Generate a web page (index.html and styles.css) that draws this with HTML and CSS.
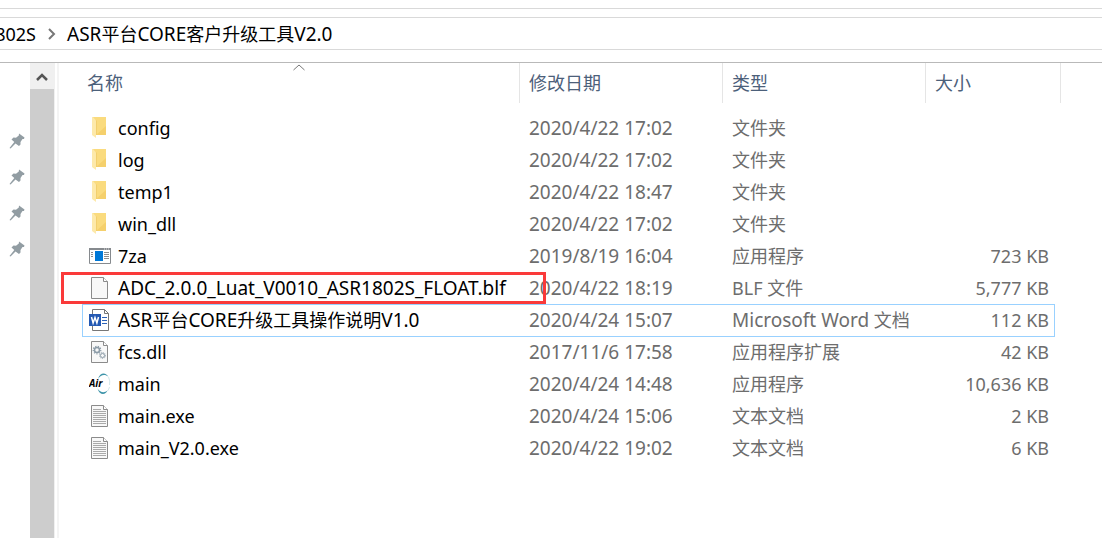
FILE: index.html
```
<!DOCTYPE html>
<html lang="zh-CN">
  <head>
    <meta charset="UTF-8" />
    <meta name="viewport" content="width=device-width, initial-scale=1.0" />
    <title>ASR平台CORE客户升级工具V2.0</title>
    <link rel="stylesheet" href="styles.css">
  </head>
  <body>
    <svg class="sprite" aria-hidden="true">
      <symbol id="pin" viewBox="0 0 16 16">
        <path d="M10 .5 15.500 4.500 15 6 13.500 6 11.500 9 11.500 11.500 10 13 6.500 10.500 1.500 15.500.5 15 5.300 9 2.500 6.500 4.500 4.500 7 4.800 9.800 2.500z" fill="#929da3" />
      </symbol>
      <symbol id="folder" viewBox="0 0 22 22">
        <path d="M4 0h13v18H4z" fill="#fadb7e" />
        <path d="M17 9v9H7z" fill="#f5d06c" />
        <path d="M3 0h1l3 3.500V21l-4-3z" fill="#fde9aa" />
        <path d="M7.500 3.500V18" stroke="#f0cb69" stroke-width=".8" />
      </symbol>
      <symbol id="app" viewBox="0 0 22 22">
        <path d="M.5 3.500h21v15H.5z" fill="#fff" stroke="#868a8e" />
        <path d="M0 3h22v2H0z" fill="#868a8e" />
        <path d="M15 3.500h1v1h-1zM17 3.500h1v1h-1zM19 3.500h1v1h-1z" fill="#ddd" />
        <path d="M6 6h8v10H6z" fill="#0078d7" />
        <path d="M2 7.500h2M2 9.500h2M2 11.500h2M15 7.500h5M15 9.500h5M15 11.500h5M15 13.500h5" stroke="#8d8d8d" />
      </symbol>
      <symbol id="file" viewBox="0 0 22 22">
        <path d="M2.500.5h12l4 4v17h-16z" fill="#f8f8f8" stroke="#8b8b8b" />
        <path d="M14.500.5v4h4" fill="#fff" stroke="#8b8b8b" />
      </symbol>
      <symbol id="word" viewBox="0 0 22 22">
        <path d="M3.500.5h12l4 4v17h-16z" fill="#fff" stroke="#777" />
        <path d="M15.500.5v4h4" fill="none" stroke="#777" />
        <path d="M13 8.500h5M13 11.500h5M13 14.500h5" stroke="#2b62b8" />
        <path d="M0 5h12v12H0z" fill="#2459b3" />
        <path d="m2.500 8 1.600 6L6 8.500 7.900 14 9.500 8" fill="none" stroke="#fff" stroke-width="1.500" />
      </symbol>
      <symbol id="dll" viewBox="0 0 22 22">
        <use href="#file" />
        <circle cx="8" cy="9" r="2.500" fill="none" stroke="#8b9ba7" stroke-width="1.500" />
        <circle cx="8" cy="9" r="3.800" fill="none" stroke="#8b9ba7" stroke-width="1.200" stroke-dasharray="1.300 1.300" />
        <circle cx="13.500" cy="14.500" r="2" fill="#f8f8f8" stroke="#8b9ba7" />
        <circle cx="13.500" cy="14.500" r="3" fill="none" stroke="#8b9ba7" stroke-dasharray="1 1" />
      </symbol>
      <symbol id="air" viewBox="0 0 22 22">
        <path d="M9 6C11-1 17-1 19.500 4 16 1 12 1.500 9 6z" fill="#3f95aa" />
        <path d="M8.500 15.500c2 7 8 7 10 2-3 2.500-7 2.500-10-2z" fill="#3f95aa" />
        <path d="M19.500 4q2 4 1 8M20.500 14q-1 3-2 4" fill="none" stroke="#b5d6dc" stroke-width=".6" />
        <text x="0" y="14" class="air-text">Air</text>
      </symbol>
      <symbol id="txt" viewBox="0 0 22 22">
        <use href="#file" />
        <path d="M4 4.500h8M4 6.500h13M4 8.500h13M4 10.500h13M4 12.500h13M4 14.500h13M4 16.500h13M4 18.500h13" stroke="#aaa" />
      </symbol>
    </svg>

    <div class="window">
      <nav class="address" aria-label="地址">
        <button type="button" class="crumb crumb-parent">802S</button>
        <svg class="crumb-arrow" viewBox="0 0 8 12"><path d="m1 1 5 5-5 5" fill="none" stroke="#777" stroke-width="2" /></svg>
        <button type="button" class="crumb"><span class="latin">ASR</span>平台<span class="latin">CORE</span>客户升级工具<span class="latin">V2.0</span></button>
      </nav>

      <div class="content">
        <aside class="sidebar">
          <svg><use href="#pin" /></svg>
          <svg><use href="#pin" /></svg>
          <svg><use href="#pin" /></svg>
          <svg><use href="#pin" /></svg>
        </aside>
        <div class="scrollbar">
          <button type="button" aria-label="向上滚动">
            <svg viewBox="0 0 12 9"><path d="m1 8 5-5 5 5" fill="none" stroke="#555" stroke-width="2.500" /></svg>
          </button>
          <div class="thumb"></div>
        </div>

        <main class="files">
          <table>
            <colgroup>
              <col class="col-name" />
              <col class="col-date" />
              <col class="col-type" />
              <col class="col-size" />
            </colgroup>
            <thead>
              <tr>
                <th>
                  <button type="button">名称</button>
                  <svg class="sort" viewBox="0 0 12 7"><path d="m.5 6 5.500-5 5.500 5" fill="none" stroke="#777" /></svg>
                </th>
                <th><button type="button">修改日期</button></th>
                <th><button type="button">类型</button></th>
                <th><button type="button">大小</button></th>
              </tr>
            </thead>
            <tbody>
              <tr>
                <td><div class="name"><svg><use href="#folder" /></svg>config</div></td>
                <td class="date">2020/4/22 17:02</td>
                <td>文件夹</td>
                <td></td>
              </tr>
              <tr>
                <td><div class="name"><svg><use href="#folder" /></svg>log</div></td>
                <td class="date">2020/4/22 17:02</td>
                <td>文件夹</td>
                <td></td>
              </tr>
              <tr>
                <td><div class="name"><svg><use href="#folder" /></svg>temp1</div></td>
                <td class="date">2020/4/22 18:47</td>
                <td>文件夹</td>
                <td></td>
              </tr>
              <tr>
                <td><div class="name"><svg><use href="#folder" /></svg>win_dll</div></td>
                <td class="date">2020/4/22 17:02</td>
                <td>文件夹</td>
                <td></td>
              </tr>
              <tr>
                <td><div class="name"><svg><use href="#app" /></svg>7za</div></td>
                <td class="date">2019/8/19 16:04</td>
                <td>应用程序</td>
                <td class="size">723 KB</td>
              </tr>
              <tr class="marked">
                <td><div class="name"><svg><use href="#file" /></svg><span class="latin">ADC_2.0.0_Luat_V0010_ASR1802S_FLOAT.blf</span></div></td>
                <td class="date">2020/4/22 18:19</td>
                <td>BLF 文件</td>
                <td class="size">5,777 KB</td>
              </tr>
              <tr class="focused">
                <td><div class="name"><svg><use href="#word" /></svg><span><span class="latin">ASR</span>平台<span class="latin">CORE</span>升级工具操作说明<span class="latin">V1.0</span></span></div></td>
                <td class="date">2020/4/24 15:07</td>
                <td><span class="latin">Microsoft Word</span> 文档</td>
                <td class="size">112 KB</td>
              </tr>
              <tr>
                <td><div class="name"><svg><use href="#dll" /></svg>fcs.dll</div></td>
                <td class="date">2017/11/6 17:58</td>
                <td>应用程序扩展</td>
                <td class="size">42 KB</td>
              </tr>
              <tr>
                <td><div class="name"><svg><use href="#air" /></svg>main</div></td>
                <td class="date">2020/4/24 14:48</td>
                <td>应用程序</td>
                <td class="size">10,636 KB</td>
              </tr>
              <tr>
                <td><div class="name"><svg><use href="#txt" /></svg>main.exe</div></td>
                <td class="date">2020/4/24 15:06</td>
                <td>文本文档</td>
                <td class="size">2 KB</td>
              </tr>
              <tr>
                <td><div class="name"><svg><use href="#txt" /></svg>main_V2.0.exe</div></td>
                <td class="date">2020/4/22 19:02</td>
                <td>文本文档</td>
                <td class="size">6 KB</td>
              </tr>
            </tbody>
          </table>
        </main>
      </div>
    </div>
  </body>
</html>
```
FILE: styles.css
```
*,
*::before,
*::after {
  box-sizing: border-box;
}
body {
  margin: 0;
  background: #fff;
  color: #000;
  font-family: "Noto Sans", "Noto Sans CJK SC", sans-serif;
  font-size: 18px;
  line-height: 24px;
}
button {
  padding: 0;
  border: none;
  background: none;
  color: inherit;
  font: inherit;
}
.sprite {
  display: none;
}
.latin,
.date {
  font-size: 19px;
}
.window {
  display: flex;
  flex-direction: column;
  height: 100vh;
  padding-top: 8px;
  overflow: hidden;
}

/* Address bar */
.window::before {
  content: "";
  flex: none;
  height: 9px;
  border-top: 1px solid #d9d9d9;
}
.address {
  display: flex;
  flex: none;
  align-items: center;
  height: 33px;
  margin-bottom: 12px;
  border: solid #d9d9d9;
  border-width: 1px 0;
  white-space: nowrap;
}
.crumb-parent {
  display: flex;
  justify-content: flex-end;
  width: 36px;
  overflow: hidden;
}
.crumb-arrow {
  width: 8px;
  height: 12px;
  margin: 0 11px 0 12px;
}

.content {
  display: flex;
  flex: 1;
  min-height: 0;
  border-top: 1px solid #b9b9b9;
}
.sidebar {
  display: flex;
  flex-direction: column;
  gap: 20px;
  width: 30px;
  padding: 70px 0 0 9px;
}
.sidebar svg {
  width: 16px;
  height: 16px;
}
.scrollbar {
  display: flex;
  flex-direction: column;
  width: 25px;
  padding-right: 1px;
  background: #f0f0f0;
}
.scrollbar button {
  display: flex;
  align-items: center;
  justify-content: center;
  height: 26px;
}
.scrollbar svg {
  width: 12px;
  height: 9px;
}
.thumb {
  flex: 1;
  background: #cdcdcd;
}

/* File list */
.files {
  flex: 1;
  margin-left: 2px;
  padding-left: 23px;
  border-left: 2px solid #f4f4f4;
}
table {
  border-collapse: separate;
  border-spacing: 0;
  table-layout: fixed;
  width: 979px;
  color: #6d6d6d;
  white-space: nowrap;
}
.col-name {
  width: 438px;
}
.col-date,
.col-type {
  width: 203px;
}
.col-size {
  width: 135px;
}
th {
  position: relative;
  height: 40px;
  padding: 0 0 0 9px;
  border-right: 1px solid #e5e5e5;
  color: #4c607a;
  font-weight: normal;
  text-align: left;
}
th:first-child {
  padding-left: 5px;
}
.sort {
  position: absolute;
  top: 1px;
  left: calc(50% - 8px);
  width: 12px;
  height: 7px;
}
tbody::before {
  content: "";
  display: block;
  height: 9px;
}
tbody tr {
  position: relative;
}
td {
  height: 32px;
  padding: 0 0 0 9px;
}
td:first-child {
  padding-left: 7px;
}
.name {
  display: flex;
  align-items: center;
  gap: 7px;
  color: #000;
}
.name svg {
  width: 22px;
  height: 22px;
}
.size {
  padding: 0 12px 0 0;
  text-align: right;
}
.air-text {
  font: italic bold 10px "Open Sans", sans-serif;
}
.focused::after {
  content: "";
  position: absolute;
  inset: 0 6px -1px 0;
  border: 1px solid #99d1ff;
}
/* Red frame round the firmware file */
.marked::after {
  content: "";
  position: absolute;
  z-index: 1;
  top: 0;
  bottom: 0;
  left: -21px;
  width: 485px;
  border: 3px solid #fa3a3a;
}
```
